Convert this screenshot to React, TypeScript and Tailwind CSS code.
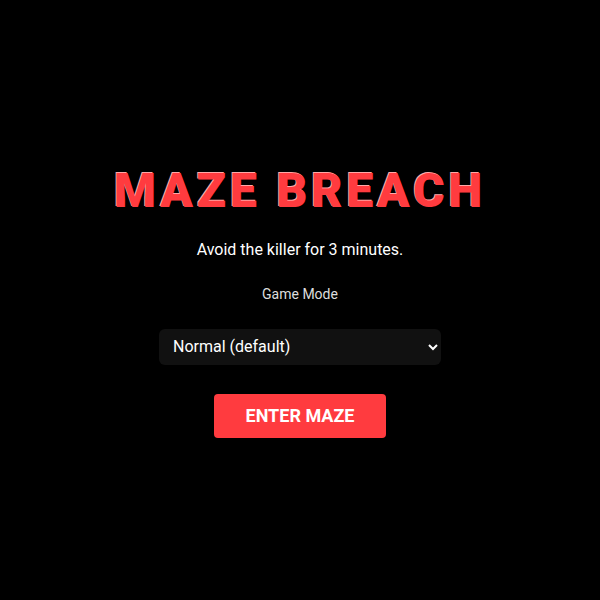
import React from 'react';

export default function App() {
  return (
    <div className="min-h-screen w-full bg-black flex flex-col items-center justify-center pt-[4px] font-['Roboto',sans-serif] text-white">
      <h1 className="text-[48px] leading-none font-black tracking-[0.08em] text-[#ff3b3f] [text-shadow:-1px_-1px_0_#ffa8a8]">
        MAZE BREACH
      </h1>
      <p className="mt-[23px] text-[16px] leading-6">Avoid the killer for 3 minutes.</p>
      <label className="mt-[22px] text-[14px] leading-5 text-[#dddddd]">Game Mode</label>
      <select
        defaultValue="normal"
        className="mt-[25px] w-[282px] h-[36px] rounded-md bg-[#111111] text-white text-[16px] pl-[10px] pr-2 outline-none"
      >
        <option value="normal">Normal (default)</option>
      </select>
      <button className="mt-[29px] w-[172px] h-[44px] rounded bg-[#ff3b3f] text-white text-[18px] font-bold">
        ENTER MAZE
      </button>
    </div>
  );
}
